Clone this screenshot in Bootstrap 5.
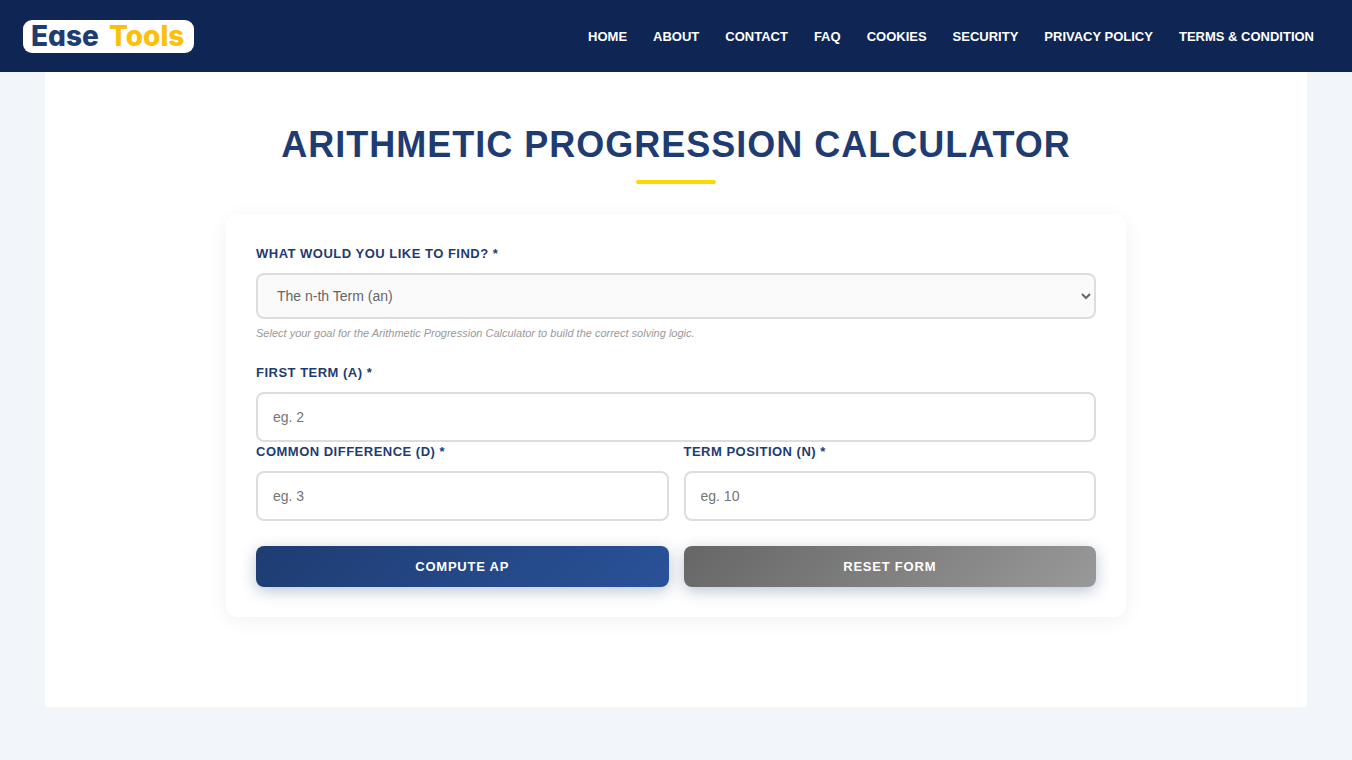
<!DOCTYPE html>
<html lang="en">
<head>
<meta charset="utf-8">
<meta name="viewport" content="width=device-width, initial-scale=1">
<title>Arithmetic Progression Calculator - Ease Tools</title>
<link href="https://cdn.jsdelivr.net/npm/bootstrap@5.3.0/dist/css/bootstrap.min.css" rel="stylesheet">
<style>
  body { font-family: "Liberation Sans", Arial, sans-serif; background: #f2f6fa; }
  .site-header { background: #0f2655; min-height: 72px; padding: 0 38px 0 22px; }
  .site-header .nav { column-gap: 26px; }
  .site-header .nav-link { padding: 0; color: #fff; font-size: 13px; line-height: 21px; font-weight: 700; text-transform: uppercase; }
  .site-header .nav-link:hover { color: #ffd700; }
  .sheet { margin: 0 45px; padding: 48px 20px 90px; border-radius: 0 0 4px 4px; }
  .page-title { color: #1e3c72; font-size: 36px; line-height: 50px; letter-spacing: 1px; margin: 0; }
  .title-bar { width: 80px; height: 4px; border-radius: 2px; background: #ffd700; margin: 10px auto 30px; }
  .calc { max-width: 900px; padding: 30px; border-radius: 12px; box-shadow: 0 4px 20px rgba(0, 0, 0, .06); }
  .field-label { display: block; color: #1e3c72; font-size: 13px; line-height: 19px; font-weight: 700; letter-spacing: .038em; text-transform: uppercase; margin-bottom: 10px; }
  .field { display: block; width: 100%; height: 50px; padding: 0 15px; border: 2px solid #ddd; border-radius: 8px; background: #fff; color: #666; font-size: 14px; }
  .field::placeholder { color: #757575; opacity: 1; }
  select.field { height: 46px; background: #fafafa; }
  .hint { color: #999; font-size: 11px; line-height: 19px; font-style: italic; margin: 5px 0 20px; }
  .pair { --bs-gutter-x: 15px; }
  .actions { margin-top: 25px; }
  .btn-calc { height: 41px; padding: 0; border: 0; border-radius: 8px; color: #fff; font-size: 13px; font-weight: 700; letter-spacing: .06em; text-transform: uppercase; box-shadow: 0 4px 15px rgba(30, 60, 114, .3); }
  .btn-calc:hover { color: #fff; }
  .btn-compute, .btn-compute:hover { background: linear-gradient(135deg, #1e3c72, #2a5298); }
  .btn-reset, .btn-reset:hover { background: linear-gradient(135deg, #666, #999); }
  .logo-word { font-family: Inter, sans-serif; font-weight: 800; font-size: 28px; font-feature-settings: "cv11"; }
</style>
</head>
<body>
<header class="site-header d-flex flex-wrap align-items-center justify-content-between">
  <a href="#" class="d-block" aria-label="Ease Tools">
    <svg class="d-block" width="174" height="48" viewBox="0 0 174 48">
      <rect x="1" y="8" width="171" height="33" rx="9" fill="#fff"/>
      <text class="logo-word" x="9" y="34" fill="#1e3c72">Ease</text>
      <text class="logo-word" x="87" y="34" fill="#fbbf0c">Tools</text>
    </svg>
  </a>
  <nav class="nav" aria-label="Main">
    <a class="nav-link" href="#">Home</a>
    <a class="nav-link" href="#">About</a>
    <a class="nav-link" href="#">Contact</a>
    <a class="nav-link" href="#">FAQ</a>
    <a class="nav-link" href="#">Cookies</a>
    <a class="nav-link" href="#">Security</a>
    <a class="nav-link" href="#">Privacy Policy</a>
    <a class="nav-link" href="#">Terms &amp; Condition</a>
  </nav>
</header>
<main class="sheet bg-white">
  <h1 class="page-title fw-bold text-center text-uppercase">Arithmetic Progression Calculator</h1>
  <div class="title-bar"></div>
  <form class="calc bg-white mx-auto">
    <label class="field-label" for="goal">What would you like to find? *</label>
    <select class="field" id="goal" aria-describedby="goal-hint">
      <option>The n-th Term (an)</option>
      <option>Sum of n Terms (Sn)</option>
    </select>
    <p class="hint" id="goal-hint">Select your goal for the Arithmetic Progression Calculator to build the correct solving logic.</p>
    <label class="field-label" for="first">First Term (a) *</label>
    <input class="field" type="text" id="first" placeholder="eg. 2">
    <div class="row pair">
      <div class="col-6">
        <label class="field-label" for="diff">Common Difference (d) *</label>
        <input class="field" type="text" id="diff" placeholder="eg. 3">
      </div>
      <div class="col-6">
        <label class="field-label" for="pos">Term Position (n) *</label>
        <input class="field" type="text" id="pos" placeholder="eg. 10">
      </div>
    </div>
    <div class="row pair actions">
      <div class="col-6"><button type="button" class="btn btn-calc btn-compute w-100">Compute AP</button></div>
      <div class="col-6"><button type="reset" class="btn btn-calc btn-reset w-100">Reset Form</button></div>
    </div>
  </form>
</main>
<script src="https://cdn.jsdelivr.net/npm/bootstrap@5.3.0/dist/js/bootstrap.bundle.min.js"></script>
</body>
</html>
